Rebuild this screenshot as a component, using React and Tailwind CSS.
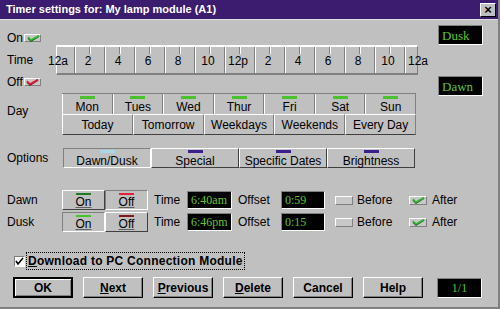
import React from "react";

const raised = "border border-t-white border-l-white border-r-[#808080] border-b-[#808080]";
const sunken = "border border-t-[#808080] border-l-[#808080] border-r-white border-b-white";

function Tick({ color, dark }) {
  return (
    <svg width="14" height="7" viewBox="0 0 14 7" className="block">
      <polyline points="2,3 5,6 13,1" fill="none" stroke={dark} strokeWidth="1.5" />
      <polyline points="2,2 5,5 13,0.5" fill="none" stroke={color} strokeWidth="1.5" />
    </svg>
  );
}

function SmallTab({ children }) {
  return (
    <div className={"w-[17px] h-[8px] bg-[#c8c8c8] flex items-center justify-center " + raised}>
      {children}
    </div>
  );
}

function WideTab({ children }) {
  return (
    <div className={"w-[18px] h-[9px] bg-[#c8c8c8] flex items-center justify-center " + raised}>
      {children}
    </div>
  );
}

function LedBox({ children, w = "w-[45px]", h = "h-[20px]", center, big }) {
  return (
    <div
      className={
        w + " " + h + " bg-black flex items-center text-[#5ec42a] font-['Liberation_Serif',serif] " +
        (big ? "text-[13px] " : "text-[12px] ") +
        (center ? "justify-center " : "pl-[3px] ") + sunken
      }
    >
      {children}
    </div>
  );
}

function Ruler() {
  const labels = ["12a", "2", "4", "6", "8", "10", "12p", "2", "4", "6", "8", "10", "12a"];
  const odd = Array.from({ length: 12 }, (_, k) => 17 + 30 * k);
  const even = Array.from({ length: 11 }, (_, k) => 32 + 30 * k);
  return (
    <div className="grid w-[390px] h-[30px]">
      <div className="col-start-1 row-start-1 ml-[13px] w-[362px] h-[30px] border-t-2 border-l border-t-white border-l-white border-b-2 border-r border-b-[#808080] border-r-[#808080]">
        <svg width="361" height="26" className="block">
          {odd.map((x) => (
            <g key={"o" + x}>
              <line x1={x + 0.5} y1="0" x2={x + 0.5} y2="26" stroke="#808080" />
              <line x1={x + 1.5} y1="0" x2={x + 1.5} y2="26" stroke="#ffffff" />
            </g>
          ))}
          {even.map((x) => (
            <g key={"e" + x}>
              <line x1={x + 0.5} y1="0" x2={x + 0.5} y2="7" stroke="#808080" />
              <line x1={x + 1.5} y1="0" x2={x + 1.5} y2="7" stroke="#ffffff" />
            </g>
          ))}
        </svg>
      </div>
      <div className="col-start-1 row-start-1 flex items-center pt-[1px]">
        {labels.map((l, i) => (
          <div key={i} className="w-[30px] text-center">
            {l}
          </div>
        ))}
      </div>
    </div>
  );
}

function Bar({ c }) {
  return <div className={"w-[15px] h-[3px] " + c} />;
}

function OnOff({ label, bar, pressed }) {
  return (
    <div
      className={
        "w-[43px] h-[20px] flex flex-col items-center bg-[#c0c0c0] " +
        (pressed ? sunken : "border border-t-white border-l-white border-r-[#404040] border-b-[#404040]")
      }
    >
      <div className={"mt-[2px] w-[15px] h-[3px] " + bar} />
      <div className="mt-[1px] leading-[13px] underline decoration-1 underline-offset-1 decoration-[#606060]">{label}</div>
    </div>
  );
}

function SunRow({ name, onBar, offBar, onPressed, offPressed, time, offset }) {
  return (
    <div className="flex items-center h-[20px]">
      <div className="w-[62px] pl-[7px]">{name}</div>
      <OnOff label="On" bar={onBar} pressed={onPressed} />
      <OnOff label="Off" bar={offBar} pressed={offPressed} />
      <div className="ml-[6px] w-[33px]">Time</div>
      <LedBox h="h-[18px]">{time}</LedBox>
      <div className="ml-[6px] w-[43px]">Offset</div>
      <LedBox w="w-[44px]" h="h-[18px]">{offset}</LedBox>
      <div className="ml-[10px]">
        <WideTab />
      </div>
      <div className="ml-[4px] w-[52px]">Before</div>
      <WideTab>
        <Tick color="#3cb83c" dark="#106010" />
      </WideTab>
      <div className="ml-[5px]">After</div>
    </div>
  );
}

function Btn({ children, def }) {
  return (
    <div
      className={
        "w-[60px] h-[21px] flex items-center justify-center font-bold bg-[#c0c0c0] " +
        (def
          ? "border-2 border-black shadow-[inset_1px_1px_0_#ffffff,inset_-1px_-1px_0_#808080]"
          : "border border-t-white border-l-white border-r-black border-b-black shadow-[inset_-1px_-1px_0_#808080]")
      }
    >
      {children}
    </div>
  );
}

export default function App() {
  const days = ["Mon", "Tues", "Wed", "Thur", "Fri", "Sat", "Sun"];
  const quick = ["Today", "Tomorrow", "Weekdays", "Weekends", "Every Day"];
  const options = [
    { t: "Dawn/Dusk", c: "bg-[#a8d8e8]", on: true },
    { t: "Special", c: "bg-[#3c1e8c]" },
    { t: "Specific Dates", c: "bg-[#3c1e8c]" },
    { t: "Brightness", c: "bg-[#3c1e8c]" },
  ];

  return (
    <div className="w-[500px] h-[309px] bg-[#c0c0c0] flex flex-col overflow-hidden text-black text-[12px] leading-none font-['Liberation_Sans',Arial,sans-serif] border-r-2 border-b-2 border-r-[#808080] border-b-[#808080]">
      {/* title bar */}
      <div className="h-[20px] shrink-0 bg-[#3b1c6e] border-b border-[#dfdfdf] flex items-center justify-between pl-[6px] pr-[2px]">
        <span className="text-white font-bold text-[11px]">Timer settings for: My lamp module (A1)</span>
        <div className="w-[16px] h-[14px] bg-[#c0c0c0] flex items-center justify-center text-[13px] font-bold border border-t-white border-l-white border-r-black border-b-black">
          ×
        </div>
      </div>

      {/* on / time / off + dusk / dawn */}
      <div className="flex h-[73px] shrink-0">
        <div className="w-[438px] flex flex-col pl-[7px]">
          <div className="mt-[12px] h-[12px] flex items-center gap-[1px]">
            <span>On</span>
            <SmallTab>
              <Tick color="#3cb83c" dark="#106010" />
            </SmallTab>
          </div>
          <div className="mt-[1px] h-[30px] flex items-center">
            <div className="w-[36px]">Time</div>
            <Ruler />
          </div>
          <div className="mt-[1px] h-[12px] flex items-center gap-[1px]">
            <span>Off</span>
            <SmallTab>
              <Tick color="#e0203a" dark="#801020" />
            </SmallTab>
          </div>
        </div>
        <div className="flex flex-col">
          <div className="mt-[5px]">
            <LedBox big>Dusk</LedBox>
          </div>
          <div className="mt-[31px]">
            <LedBox big>Dawn</LedBox>
          </div>
        </div>
      </div>

      {/* day */}
      <div className="flex shrink-0">
        <div className="w-[62px] pl-[7px] pt-[12px]">Day</div>
        <div className="w-[354px] flex flex-col">
          <div className="flex h-[21px] border-t border-[#808080]">
            {days.map((d) => (
              <div
                key={d}
                className="flex-1 flex flex-col items-center border-l border-l-white border-r border-r-[#808080]"
              >
                <div className="mt-[2px]">
                  <Bar c="bg-[#4ac22e]" />
                </div>
                <div className="mt-[2px] leading-[13px]">{d}</div>
              </div>
            ))}
          </div>
          <div className="flex h-[21px]">
            {quick.map((q) => (
              <div
                key={q}
                className="flex-1 flex items-center justify-center border border-t-white border-l-white border-r-[#808080] border-b-[#404040]"
              >
                {q}
              </div>
            ))}
          </div>
        </div>
      </div>

      {/* options */}
      <div className="flex items-center mt-[13px] h-[20px] shrink-0">
        <div className="w-[63px] pl-[7px]">Options</div>
        <div className="w-[352px] flex h-[20px]">
          {options.map((o) => (
            <div
              key={o.t}
              className={
                "flex-1 flex flex-col items-center " +
                (o.on
                  ? "border border-t-[#808080] border-l-[#808080] border-r-white border-b-white"
                  : "border border-t-white border-l-white border-r-[#404040] border-b-[#404040]")
              }
            >
              <div className="mt-[1px]">
                <Bar c={o.c} />
              </div>
              <div className="mt-[2px] leading-[13px]">{o.t}</div>
            </div>
          ))}
        </div>
      </div>

      {/* dawn / dusk */}
      <div className="mt-[22px] shrink-0">
        <SunRow
          name="Dawn"
          onBar="bg-[#207a20]"
          offBar="bg-[#e8203c]"
          offPressed
          time="6:40am"
          offset="0:59"
        />
      </div>
      <div className="mt-[2px] shrink-0">
        <SunRow
          name="Dusk"
          onBar="bg-[#4ac22e]"
          offBar="bg-[#801818]"
          onPressed
          time="6:46pm"
          offset="0:15"
        />
      </div>

      {/* download */}
      <div className="mt-[20px] h-[18px] flex items-center pl-[14px] shrink-0">
        <div className="w-[11px] h-[11px] bg-white flex items-center justify-center border border-t-[#808080] border-l-[#808080] border-r-white border-b-white">
          <svg width="9" height="9" viewBox="0 0 9 9" className="block">
            <polyline points="1,4 3,7 8,1" fill="none" stroke="#000" strokeWidth="1.6" />
          </svg>
        </div>
        <div className="ml-[1px] px-[1px] py-[2px] border border-dotted border-black font-bold tracking-[0.25px]">
          <span className="underline">D</span>ownload to PC Connection Module
        </div>
      </div>

      {/* buttons */}
      <div className="mt-[7px] flex items-center pl-[13px] gap-[10px] shrink-0">
        <Btn def>OK</Btn>
        <Btn>
          <span>
            <span className="underline">N</span>ext
          </span>
        </Btn>
        <Btn>
          <span>
            <span className="underline">P</span>revious
          </span>
        </Btn>
        <Btn>
          <span>
            <span className="underline">D</span>elete
          </span>
        </Btn>
        <Btn>Cancel</Btn>
        <Btn>Help</Btn>
        <div className="ml-[4px]">
          <LedBox center>1/1</LedBox>
        </div>
      </div>
    </div>
  );
}
